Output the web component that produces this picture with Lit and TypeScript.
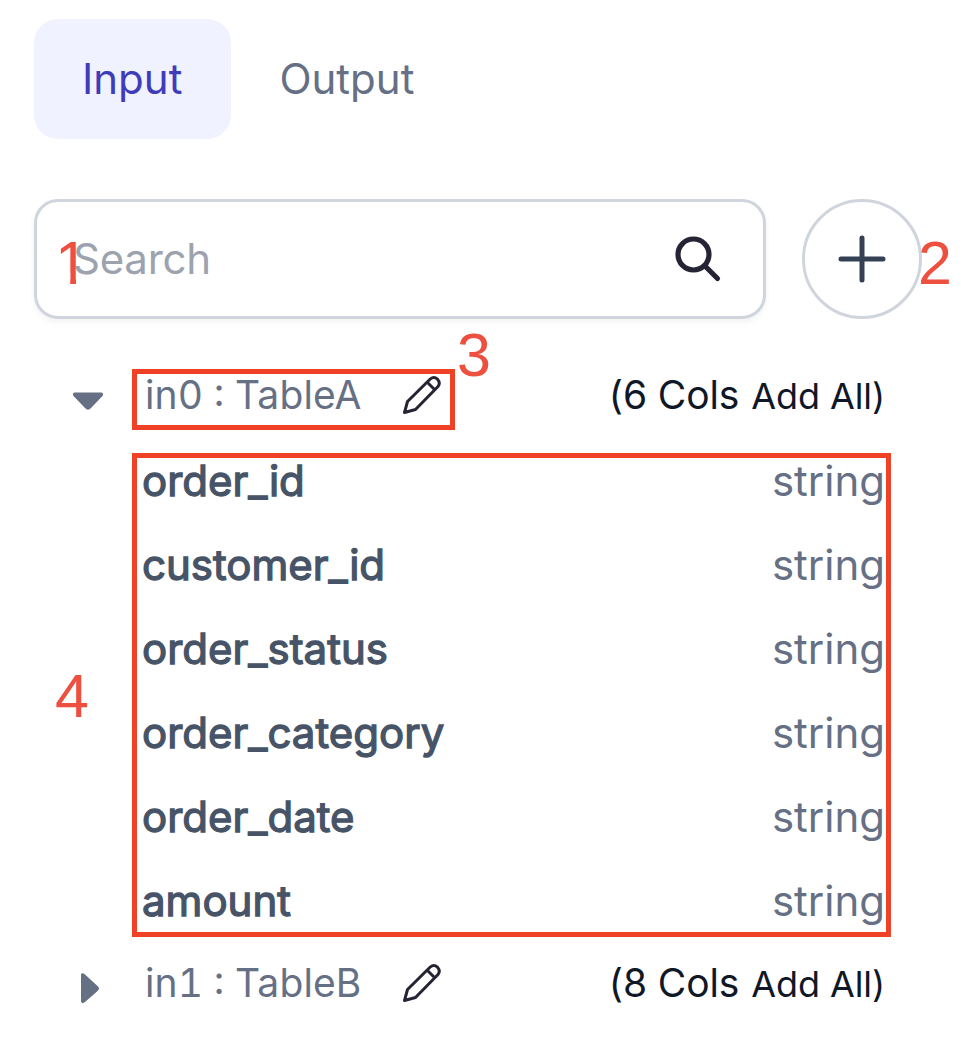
import { LitElement, html, css } from "lit";
import { customElement, property } from "lit/decorators.js";

interface TableInput {
  alias: string;
  table: string;
  cols: number;
  open: boolean;
  columns: { name: string; type: string }[];
}

const INPUTS: TableInput[] = [
  {
    alias: "in0",
    table: "TableA",
    cols: 6,
    open: true,
    columns: ["order_id", "customer_id", "order_status", "order_category", "order_date", "amount"].map(
      (name) => ({ name, type: "string" })
    ),
  },
  { alias: "in1", table: "TableB", cols: 8, open: false, columns: [] },
];

@customElement("input-table")
export class InputTable extends LitElement {
  @property({ attribute: false }) data!: TableInput;

  static styles = css`
    :host { display: block; }
    .head { display: flex; align-items: center; height: 84px; padding-left: 38px; color: #667085; }
    .caret { width: 32px; height: 32px; margin: 11px 41px 0 0; fill: #667085; flex: none; }
    .title { font-size: 39px; white-space: pre; width: 257px; font-variant-numeric: tabular-nums; letter-spacing: 0.120px; }
    .colon { display: inline-block; transform: translateY(-3px); }
    .edit { width: 40px; height: 40px; flex: none; margin-bottom: 1px; fill: none; stroke: #252435; stroke-width: 3; stroke-linejoin: round; stroke-linecap: round; }
    .count { margin-left: auto; font-size: 39px; color: #101828; display: flex; align-items: baseline; gap: 12px; letter-spacing: -0.100px; }
    .title, .count { margin-bottom: 1px; }
    .add { font-size: 36px; }
    .row { display: flex; align-items: center; justify-content: space-between; height: 84px; padding-left: 108px; position: relative; top: 1px; font-size: 42px; }
    .name { color: #475467; -webkit-text-stroke: 1.3px #475467; }
    .type { color: #667085; }
  `;

  render() {
    const d = this.data;
    return html`
      <div class="head">
        <svg class="caret" viewBox="0 0 32 32">
          ${d.open
            ? html`<svg><path d="M2.500 7.500H29.500Q32 8.500 30.500 11L19 23Q16 26.500 13 23L1.500 11Q0 8.500 2.500 7.500Z" /></svg>`
            : html`<svg><path d="M9 1.500Q10-1 13 1.500L25 12.500Q29 15.500 25 18.500L13 29Q10 31.500 9 28.500Z" /></svg>`}
        </svg>
        <span class="title">${d.alias} <span class="colon">:</span> ${d.table}</span>
        <svg class="edit" viewBox="0 0 40 40">
          <path d="M2.500 37.500L5.500 26.500L28.500 3.800Q32 1 35.500 4.200Q38.800 8 36 11.500L13.500 34.500Z M25.500 7.500L32.500 14.500" />
        </svg>
        <span class="count"><span>(${d.cols} Cols</span><span class="add">Add All)</span></span>
      </div>
      ${d.columns.map(
        (c) => html`<div class="row"><span class="name">${c.name}</span><span class="type">${c.type}</span></div>`
      )}
    `;
  }
}

@customElement("app-root")
export class AppRoot extends LitElement {
  static styles = css`
    :host { display: block; position: relative; box-sizing: border-box; height: 1062px; overflow: hidden; padding: 19px 54px 0 34px; background: #fff; font-family: Inter, sans-serif; font-size: 42px; }
    .tabs { display: flex; height: 120px; }
    .tab { display: flex; align-items: center; box-sizing: border-box; padding: 0 49px 1px 48px; border-radius: 24px; color: #667085; }
    .active { background: #f0f2ff; color: #3f3cbb; }
    .tools { display: flex; gap: 36px; margin-top: 60px; height: 120px; }
    .search { box-sizing: border-box; width: 732px; display: flex; align-items: center; justify-content: space-between; padding: 0 41px 0 36px; border: 3px solid #d0d5dd; border-radius: 24px; box-shadow: 0 3px 6px rgba(16, 24, 40, 0.05); color: #9ca3af; }
    .placeholder { margin-bottom: 2px; letter-spacing: -0.250px; }
    .lens { width: 48px; height: 48px; fill: none; stroke: #252435; stroke-width: 5.200; stroke-linecap: round; }
    .plus { box-sizing: border-box; width: 120px; height: 120px; flex: none; border: 3px solid #d0d5dd; border-radius: 50%; display: grid; place-items: center; }
    .plus svg { width: 48px; height: 48px; stroke: #344054; stroke-width: 5; stroke-linecap: round; }
    .list { margin-top: 34px; padding-right: 37px; }
    .frame { position: absolute; box-sizing: border-box; border: 5px solid #ee4126; }
    .frame-title { left: 131.500px; top: 368.500px; width: 323px; height: 61px; }
    .frame-columns { left: 131.500px; top: 452.500px; width: 759px; height: 484px; }
    .mark { position: absolute; font: 61px/60px "Liberation Sans", Arial, sans-serif; color: #ee5040; }
    .m1 { left: 55px; top: 233px; clip-path: polygon(0 0, 21px 0, 21px 60px, 15.200px 60px, 15.200px 40px, 0 40px); }
    .m2 { left: 918px; top: 233px; }
    .m3 { left: 457px; top: 325px; }
    .m4 { left: 55px; top: 666px; }
  `;

  render() {
    return html`
      <div class="tabs">
        <div class="tab active">Input</div>
        <div class="tab">Output</div>
      </div>
      <div class="tools">
        <div class="search">
          <span class="placeholder">Search</span>
          <svg class="lens" viewBox="0 0 48 48"><circle cx="19.500" cy="19.500" r="15.500" /><path d="M31 31L43.500 43.500" /></svg>
        </div>
        <div class="plus"><svg viewBox="0 0 48 48"><path d="M24 3V45M3 24H45" /></svg></div>
      </div>
      <div class="list">${INPUTS.map((d) => html`<input-table .data=${d}></input-table>`)}</div>
      <div class="frame frame-title"></div>
      <div class="frame frame-columns"></div>
      <span class="mark m1">1</span>
      <span class="mark m2">2</span>
      <span class="mark m3">3</span>
      <span class="mark m4">4</span>
    `;
  }
}
